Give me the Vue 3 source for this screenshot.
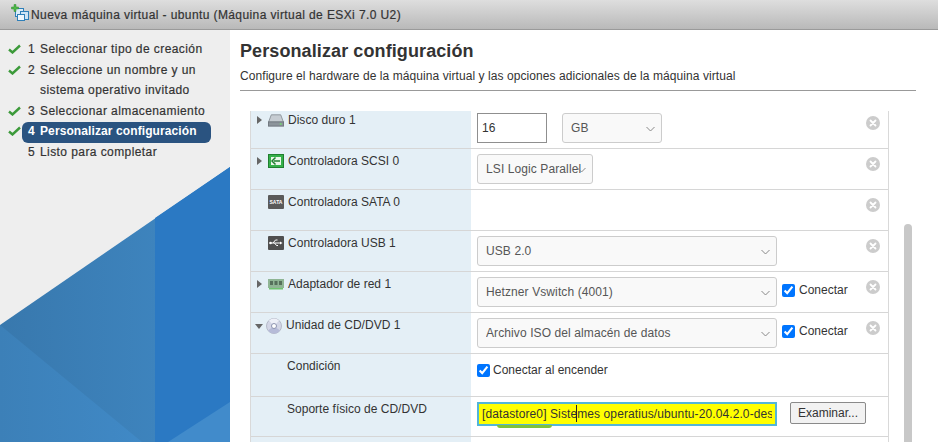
<script setup>
const steps = [
  { n: 1, lines: ["Seleccionar tipo de creación"], done: true },
  { n: 2, lines: ["Seleccione un nombre y un", "sistema operativo invitado"], done: true },
  { n: 3, lines: ["Seleccionar almacenamiento"], done: true },
  { n: 4, lines: ["Personalizar configuración"], done: true, active: true },
  { n: 5, lines: ["Listo para completar"], done: false },
]
</script>

<template>
  <div class="wizard">
    <header class="wizard-head">
      <svg class="head-icon" width="18" height="18" viewBox="0 0 18 18">
        <rect x="4.5" y="4.5" width="8" height="8" fill="#dcecf8" stroke="#2f7fb8" />
        <rect x="9.5" y="7.5" width="8" height="8" fill="#cfe4f5" stroke="#2f7fb8" />
        <rect x="6.5" y="10.5" width="7" height="6" fill="#eef6fc" stroke="#2f7fb8" />
        <path d="M3 0.5h2v2.500h2.500v2h-2.500v2.500h-2v-2.500h-2.500v-2h2.500z" fill="#4fb848" stroke="#2f8a30" stroke-width="0.5" />
      </svg>
      <span>Nueva máquina virtual - ubuntu (Máquina virtual de ESXi 7.0 U2)</span>
    </header>

    <div class="wizard-body">
      <aside class="side">
        <svg class="side-art" width="230" height="276" viewBox="0 0 230 276">
          <defs>
            <linearGradient id="midFill" x1="0" y1="0" x2="1" y2="0">
              <stop offset="0" stop-color="#3878ad" />
              <stop offset="1" stop-color="#4089c5" />
            </linearGradient>
            <linearGradient id="lowFill" x1="0" y1="0" x2="1" y2="0">
              <stop offset="0" stop-color="#3c80b8" />
              <stop offset="1" stop-color="#4089c6" />
            </linearGradient>
          </defs>
          <path d="M0 159 L230 1 V276 H0 Z" fill="url(#midFill)" />
          <path d="M0 159 L142 276 H0 Z" fill="url(#lowFill)" />
          <path d="M155 52 L230 1 V276 H155 Z" fill="#2b79c3" />
          <path d="M168 276 L230 236 V276 Z" fill="#418bcb" />
        </svg>
        <ol class="steps">
          <li v-for="s in steps" :key="s.n" class="step" :class="{ active: s.active }">
            <svg v-if="s.done" class="check" width="13" height="10" viewBox="0 0 13 10">
              <path d="M1 5.500 L4.500 8.500 L12 1.500" fill="none" stroke="#3c9a3a" stroke-width="2.400" />
            </svg>
            <div class="step-label">
              <span class="step-num">{{ s.n }}</span>
              <div>
                <div v-for="line in s.lines" :key="line" class="step-line">{{ line }}</div>
              </div>
            </div>
          </li>
        </ol>
      </aside>

      <main class="content">
        <h1 class="title">Personalizar configuración</h1>
        <p class="subtitle">Configure el hardware de la máquina virtual y las opciones adicionales de la máquina virtual</p>

        <div class="panel">
          <div class="table">
            <div class="table-inner">
              <div class="row">
                <div class="cell-label">
                  <span class="arrow"></span>
                  <svg class="dev-icon" width="17" height="14" viewBox="0 0 17 14">
                    <path d="M3.500 1.500h10l3 8h-16z" fill="#c6ccd2" stroke="#8d949b" />
                    <rect x="0.500" y="9" width="16" height="4.500" fill="#8c949b" stroke="#6f767d" />
                    <rect x="12.500" y="10.500" width="2" height="1.500" fill="#6ee06a" />
                  </svg>
                  <span>Disco duro 1</span>
                </div>
                <div class="cell-value">
                  <input class="num-input" type="text" value="16" />
                  <div class="sel gb">
                    <select><option>GB</option></select>
                    <svg class="chev" width="9" height="6" viewBox="0 0 9 6"><path d="M0.500 1 L4.500 5 L8.500 1" fill="none" stroke="#888" /></svg>
                  </div>
                  <button class="remove" type="button" aria-label="Quitar">
                    <svg width="14" height="14" viewBox="0 0 14 14"><path d="M4.500 4.500l5 5m0-5l-5 5" stroke="#fff" stroke-width="1.800" stroke-linecap="round" /></svg>
                  </button>
                </div>
              </div>

              <div class="row">
                <div class="cell-label">
                  <span class="arrow"></span>
                  <svg class="dev-icon" width="16" height="14" viewBox="0 0 16 14">
                    <rect x="0.500" y="0.500" width="15" height="13" fill="#35b04a" stroke="#1f7f30" />
                    <rect x="3" y="3" width="10" height="8" fill="#eaf7ea" />
                    <path d="M7.500 3.500 L4 7 L7.500 10.500 M6 7h6" fill="none" stroke="#1f7f30" stroke-width="1.500" />
                  </svg>
                  <span>Controladora SCSI 0</span>
                </div>
                <div class="cell-value">
                  <div class="sel lsi">
                    <select><option>LSI Logic Parallel</option></select>
                    <svg class="chev" width="9" height="6" viewBox="0 0 9 6"><path d="M0.500 1 L4.500 5 L8.500 1" fill="none" stroke="#888" /></svg>
                  </div>
                  <button class="remove" type="button" aria-label="Quitar">
                    <svg width="14" height="14" viewBox="0 0 14 14"><path d="M4.500 4.500l5 5m0-5l-5 5" stroke="#fff" stroke-width="1.800" stroke-linecap="round" /></svg>
                  </button>
                </div>
              </div>

              <div class="row">
                <div class="cell-label">
                  <span class="arrow blank"></span>
                  <svg class="dev-icon" width="16" height="14" viewBox="0 0 16 14">
                    <rect width="16" height="14" rx="1" fill="#5a5a5a" />
                    <text x="8" y="9" font-size="5" font-weight="700" fill="#fff" text-anchor="middle" font-family="Liberation Sans, sans-serif">SATA</text>
                  </svg>
                  <span>Controladora SATA 0</span>
                </div>
                <div class="cell-value">
                  <button class="remove" type="button" aria-label="Quitar">
                    <svg width="14" height="14" viewBox="0 0 14 14"><path d="M4.500 4.500l5 5m0-5l-5 5" stroke="#fff" stroke-width="1.800" stroke-linecap="round" /></svg>
                  </button>
                </div>
              </div>

              <div class="row">
                <div class="cell-label">
                  <span class="arrow blank"></span>
                  <svg class="dev-icon" width="16" height="14" viewBox="0 0 16 14">
                    <rect width="16" height="14" rx="1" fill="#4f4f4f" />
                    <path d="M2 7h11M5 7l2.500-3h2M6.500 7l2 2.500h1.500" fill="none" stroke="#fff" />
                    <circle cx="2.500" cy="7" r="1.300" fill="#fff" />
                    <path d="M12 5.500l2.500 1.500-2.500 1.500z" fill="#fff" />
                  </svg>
                  <span>Controladora USB 1</span>
                </div>
                <div class="cell-value">
                  <div class="sel wide">
                    <select><option>USB 2.0</option></select>
                    <svg class="chev" width="9" height="6" viewBox="0 0 9 6"><path d="M0.500 1 L4.500 5 L8.500 1" fill="none" stroke="#888" /></svg>
                  </div>
                  <button class="remove" type="button" aria-label="Quitar">
                    <svg width="14" height="14" viewBox="0 0 14 14"><path d="M4.500 4.500l5 5m0-5l-5 5" stroke="#fff" stroke-width="1.800" stroke-linecap="round" /></svg>
                  </button>
                </div>
              </div>

              <div class="row">
                <div class="cell-label">
                  <span class="arrow"></span>
                  <svg class="dev-icon" width="16" height="14" viewBox="0 0 16 14">
                    <rect y="2" width="16" height="9" fill="#8fb594" />
                    <rect x="2" y="4" width="3" height="4" fill="#55705a" />
                    <rect x="6.500" y="4" width="3" height="4" fill="#55705a" />
                    <rect x="11" y="4" width="3" height="4" fill="#55705a" />
                    <rect x="1" y="11" width="14" height="1.500" fill="#6ec46e" />
                  </svg>
                  <span>Adaptador de red 1</span>
                </div>
                <div class="cell-value">
                  <div class="sel wide">
                    <select><option>Hetzner Vswitch (4001)</option></select>
                    <svg class="chev" width="9" height="6" viewBox="0 0 9 6"><path d="M0.500 1 L4.500 5 L8.500 1" fill="none" stroke="#888" /></svg>
                  </div>
                  <label class="check-label connect"><input type="checkbox" checked />Conectar</label>
                  <button class="remove" type="button" aria-label="Quitar">
                    <svg width="14" height="14" viewBox="0 0 14 14"><path d="M4.500 4.500l5 5m0-5l-5 5" stroke="#fff" stroke-width="1.800" stroke-linecap="round" /></svg>
                  </button>
                </div>
              </div>

              <div class="row">
                <div class="cell-label">
                  <span class="arrow open"></span>
                  <svg class="dev-icon" width="16" height="16" viewBox="0 0 16 16">
                    <circle cx="8" cy="8" r="7.500" fill="#d3d6e6" stroke="#b5bac8" />
                    <path d="M8 8L3 2.500A7.500 7.500 0 0 1 13 2.500z" fill="#eef0f8" />
                    <path d="M8 8L14 12.500A7.500 7.500 0 0 1 2 12.500z" fill="#b6bbd8" />
                    <circle cx="8" cy="8" r="2.500" fill="#fff" stroke="#8d93b0" />
                  </svg>
                  <span>Unidad de CD/DVD 1</span>
                </div>
                <div class="cell-value">
                  <div class="sel wide">
                    <select><option>Archivo ISO del almacén de datos</option></select>
                    <svg class="chev" width="9" height="6" viewBox="0 0 9 6"><path d="M0.500 1 L4.500 5 L8.500 1" fill="none" stroke="#888" /></svg>
                  </div>
                  <label class="check-label connect"><input type="checkbox" checked />Conectar</label>
                  <button class="remove" type="button" aria-label="Quitar">
                    <svg width="14" height="14" viewBox="0 0 14 14"><path d="M4.500 4.500l5 5m0-5l-5 5" stroke="#fff" stroke-width="1.800" stroke-linecap="round" /></svg>
                  </button>
                </div>
              </div>

              <div class="row tall">
                <div class="cell-label sub"><span>Condición</span></div>
                <div class="cell-value">
                  <label class="check-label power"><input type="checkbox" checked />Conectar al encender</label>
                </div>
              </div>

              <div class="row short">
                <div class="cell-label sub"><span>Soporte físico de CD/DVD</span></div>
                <div class="cell-value">
                  <div class="iso">
                    <input class="iso-input" type="text" value="[datastore0] Sistemes operatius/ubuntu-20.04.2.0-desktop-amd64.iso" />
                    <span class="caret"></span>
                    <span class="smear"></span>
                  </div>
                  <button class="browse" type="button">Examinar...</button>
                </div>
              </div>

              <div class="row">
                <div class="cell-label"></div>
                <div class="cell-value"></div>
              </div>
            </div>
          </div>
          <div class="scroll-track"><div class="scroll-thumb"></div></div>
        </div>
      </main>
    </div>
  </div>
</template>

<style>
html, body { margin: 0; background: #fff; }
</style>

<style scoped>
.wizard {
  width: 938px;
  height: 442px;
  overflow: hidden;
  display: flex;
  flex-direction: column;
  font-family: "Liberation Sans", Arial, sans-serif;
  font-size: 12px;
  color: #333;
}
.wizard-head {
  height: 29px;
  flex: none;
  display: flex;
  align-items: center;
  gap: 2px;
  padding-left: 11px;
  background: linear-gradient(#dedede, #b9b9b9);
  border-bottom: 1px solid #9a9a9a;
  font-size: 12px;
  letter-spacing: 0.4px;
  -webkit-text-stroke: 0.2px #333;
}
.head-icon { margin-bottom: 3px; }
.wizard-body {
  flex: 1;
  display: flex;
  min-height: 0;
}

.side {
  width: 230px;
  flex: none;
  position: relative;
  background: #eee;
}
.side-art {
  position: absolute;
  left: 0;
  bottom: 0;
}
.steps {
  position: relative;
  list-style: none;
  margin: 0;
  padding: 10px 19px 0 22px;
}
.step {
  position: relative;
  padding: 2px 0 3px;
  border-radius: 6px;
  letter-spacing: 0.42px;
  line-height: 15.500px;
  -webkit-text-stroke: 0.2px #333;
}
.step.active {
  background: #2a5380;
  color: #fff;
  font-weight: 700;
  letter-spacing: 0.1px;
  -webkit-text-stroke: 0;
}
.check {
  position: absolute;
  left: -14px;
  top: 4px;
}
.step-label {
  display: flex;
  padding-left: 6px;
}
.step-num { width: 12px; flex: none; }
.step-line + .step-line { margin-top: 5px; }

.content {
  flex: 1;
  min-width: 0;
  padding: 0 22px 0 10px;
}
.title {
  margin: 11px 0 0;
  font-size: 18px;
  line-height: 20px;
  font-weight: 700;
  color: #333;
  letter-spacing: 0.1px;
}
.subtitle {
  margin: 8px 0 0;
  padding-bottom: 6px;
  line-height: 15px;
  font-size: 12px;
  color: #333;
  letter-spacing: 0.07px;
  border-bottom: 1px solid #999;
}
.panel {
  display: flex;
  margin: 20px 0 0 10px;
}
.table {
  width: 639px;
  height: 331px;
  overflow: hidden;
  box-sizing: border-box;
  border-left: 1px solid #d9d9d9;
  border-right: 1px solid #d9d9d9;
}
.table-inner { margin-top: -3px; }
.row {
  display: flex;
  height: 41px;
  box-sizing: border-box;
  border-bottom: 1px solid #d6d6d6;
}
.row.tall { height: 43px; }
.row.short { height: 40px; }
.cell-label {
  width: 220px;
  flex: none;
  box-sizing: border-box;
  background: #e4eff6;
  display: flex;
  align-items: flex-start;
  padding: 5px 0 0 5px;
  line-height: 15px;
  color: #333;
  letter-spacing: 0.02px;
}
.cell-label > span:last-child { margin-top: 0; }
.cell-label.sub { padding-left: 36px; }
.arrow {
  width: 0;
  height: 0;
  margin: 3px 6px 0 1px;
  border-left: 5px solid #666;
  border-top: 4px solid transparent;
  border-bottom: 4px solid transparent;
  flex: none;
}
.arrow.blank { visibility: hidden; }
.arrow.open {
  margin: 6px 3px 0 -1px;
  border-left: 4.500px solid transparent;
  border-right: 4.500px solid transparent;
  border-top: 5px solid #666;
  border-bottom: 0;
}
.dev-icon {
  flex: none;
  width: 16px;
  margin: 0 4px 0 0;
}
.cell-value {
  flex: 1;
  position: relative;
  display: flex;
  align-items: flex-start;
  padding: 5px 0 0 6px;
}
.num-input {
  width: 70px;
  height: 30px;
  box-sizing: border-box;
  border: 1px solid #8f8f8f;
  padding: 0 4px;
  font: inherit;
  color: #333;
  outline: none;
}
.sel { position: relative; height: 30px; }
.sel.gb { width: 100px; margin-left: 15px; }
.sel.lsi { width: 116px; }
.sel.wide { width: 300px; }
.sel select {
  width: 100%;
  height: 100%;
  appearance: none;
  box-sizing: border-box;
  border: 1px solid #ccc;
  border-radius: 3px;
  background: #f9f9f9;
  padding: 0 8px;
  font: inherit;
  color: #565656;
  letter-spacing: 0.1px;
}
.chev {
  position: absolute;
  right: 7px;
  top: 13px;
}
.check-label {
  display: flex;
  align-items: center;
  gap: 4px;
  color: #333;
  line-height: 15px;
}
.check-label input {
  width: 13px;
  height: 13px;
  margin: 0;
}
.connect { margin: 6px 0 0 5px; }
.power { margin-top: 4px; gap: 3px; }
.remove {
  position: absolute;
  left: 395px;
  top: 8px;
  width: 14px;
  height: 14px;
  padding: 0;
  border: 0;
  border-radius: 50%;
  background: #ccc;
}
.remove svg { display: block; }
.iso {
  position: relative;
  width: 300px;
  height: 24px;
}
.iso-input {
  width: 100%;
  height: 100%;
  box-sizing: border-box;
  border: 1px solid #53b6d8;
  outline: 1px solid #53b6d8;
  outline-offset: -2px;
  background: #ff0;
  padding: 0 4px;
  font: inherit;
  color: #333;
  letter-spacing: 0.1px;
}
.caret {
  position: absolute;
  left: 99px;
  top: 3px;
  width: 1px;
  height: 17px;
  background: #222;
}
.smear {
  position: absolute;
  left: 20px;
  bottom: -2px;
  width: 55px;
  height: 3px;
  background: #7ec23a;
  border-radius: 0 0 20px 20px;
}
.browse {
  width: 76px;
  height: 22px;
  margin: 0 0 0 13px;
  box-sizing: border-box;
  border: 1px solid #8a8a8a;
  border-radius: 2px;
  background: #f2f2f2;
  padding: 0;
  font: inherit;
  color: #333;
}
.scroll-track {
  position: relative;
  width: 8px;
  margin-left: 15px;
}
.scroll-thumb {
  margin-top: 113px;
  height: 218px;
  border-radius: 4px 4px 0 0;
  background: #c8c8c8;
}
</style>
